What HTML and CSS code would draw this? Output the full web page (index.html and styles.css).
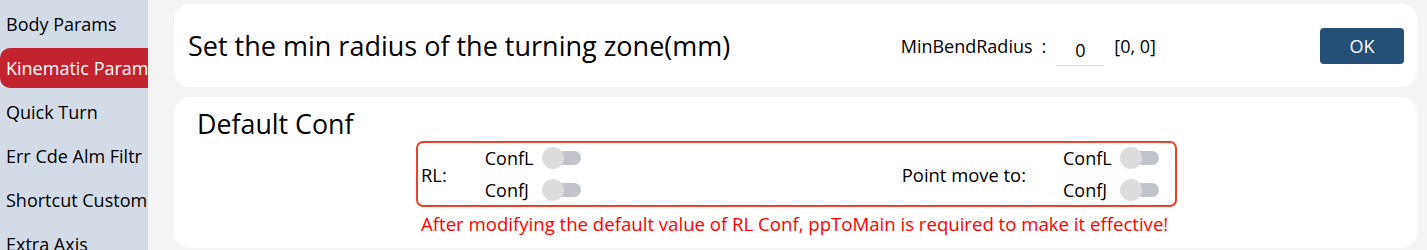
FILE: index.html
```html
<!DOCTYPE html>
<html>
<head>
<meta charset="utf-8">
<link rel="stylesheet" href="styles.css">
</head>
<body>
<div class="app">
  <nav class="sidebar">
    <div class="nav-item">Body Params</div>
    <div class="nav-item active">Kinematic Params</div>
    <div class="nav-item">Quick Turn</div>
    <div class="nav-item">Err Cde Alm Filtr</div>
    <div class="nav-item">Shortcut Customization</div>
    <div class="nav-item">Extra Axis</div>
  </nav>
  <main class="content">
    <section class="card card-top">
      <div class="title">Set the min radius of the turning zone(mm)</div>
      <div class="field">
        <span class="field-label">MinBendRadius<span class="colon">:</span></span>
        <span class="field-input">0</span>
        <span class="field-range">[0, 0]</span>
      </div>
      <button class="ok-btn">OK</button>
    </section>
    <section class="card card-conf">
      <div class="conf-title">Default Conf</div>
      <div class="conf-box">
        <div class="conf-group">
          <span class="group-label">RL:</span>
          <div class="switches">
            <div class="switch-row"><span class="sw-label">ConfL</span><span class="switch"><span class="knob"></span></span></div>
            <div class="switch-row"><span class="sw-label">ConfJ</span><span class="switch"><span class="knob"></span></span></div>
          </div>
        </div>
        <div class="conf-group right">
          <span class="group-label">Point move to:</span>
          <div class="switches">
            <div class="switch-row"><span class="sw-label">ConfL</span><span class="switch"><span class="knob"></span></span></div>
            <div class="switch-row"><span class="sw-label">ConfJ</span><span class="switch"><span class="knob"></span></span></div>
          </div>
        </div>
      </div>
      <div class="warning">After modifying the default value of RL Conf, ppToMain is required to make it effective!</div>
    </section>
  </main>
</div>
</body>
</html>
```

FILE: styles.css
```css
* { box-sizing: border-box; }
html, body { margin: 0; padding: 0; }
body {
  font-family: "Open Sans", "Noto Sans", sans-serif;
  color: #000;
  background: #f4f4f4;
  width: 1427px;
  height: 250px;
  overflow: hidden;
}
.app {
  display: flex;
  height: 250px;
}
.sidebar {
  width: 148px;
  flex: none;
  background: #d3dbe7;
  padding-top: 2px;
  overflow: hidden;
}
.nav-item {
  height: 44px;
  line-height: 44px;
  padding-left: 6px;
  font-size: 18px;
  white-space: nowrap;
  overflow: hidden;
}
.nav-item.active {
  background: #c3232f;
  color: #fff;
  border-radius: 10px 0 0 10px;
  height: 40px;
  line-height: 40px;
  margin: 2px 0;
}
.content {
  flex: 1;
  padding: 4px 10px 0 26px;
  display: flex;
  flex-direction: column;
  gap: 10px;
}
.card {
  background: #fff;
  border-radius: 16px;
}
.card-top {
  height: 83px;
  display: flex;
  align-items: center;
  padding: 0 13px 0 14px;
}
.title {
  font-size: 27px;
  flex: 1;
}
.field {
  display: flex;
  align-items: center;
  font-size: 18px;
  margin-right: 164px;
}
.colon { margin-left: 9px; }
.field-label { margin-right: 10px; }
.field-input {
  width: 48px;
  text-align: center;
  border-bottom: 1px solid #dcdcdc;
  padding: 6px 0 3px;
  margin-top: 6px;
}
.field-range { margin-left: 10px; }
.ok-btn {
  width: 84px;
  height: 36px;
  background: #244f77;
  color: #fff;
  border: none;
  border-radius: 4px;
  font-family: inherit;
  font-size: 18px;
}
.card-conf {
  height: 151px;
  padding: 10px 0 0 23px;
}
.conf-title {
  font-size: 26.8px;
  line-height: 34px;
}
.conf-box {
  margin-left: 219px;
  width: 761px;
  height: 66px;
  border: 2px solid #e8412c;
  border-radius: 7px;
  display: flex;
  justify-content: space-between;
  align-items: center;
  padding: 0 16px 0 3px;
}
.conf-group {
  display: flex;
  align-items: center;
}
.group-label {
  font-size: 18.4px;
  margin-right: 38px;
}
.right .group-label { margin-right: 37px; }
.switches {
  display: flex;
  flex-direction: column;
  gap: 10px;
}
.switch-row {
  display: flex;
  align-items: center;
  height: 22px;
  font-size: 18px;
}
.sw-label { width: 58px; }
.switch {
  position: relative;
  width: 38px;
  height: 14px;
  background: #c0c3c9;
  border-radius: 7px;
}
.knob {
  position: absolute;
  left: -1px;
  top: -4px;
  width: 22px;
  height: 22px;
  border-radius: 50%;
  background: #dcdcdc;
}
.warning {
  margin-left: 224px;
  margin-top: 4px;
  color: #f00;
  font-size: 18.6px;
}
```
